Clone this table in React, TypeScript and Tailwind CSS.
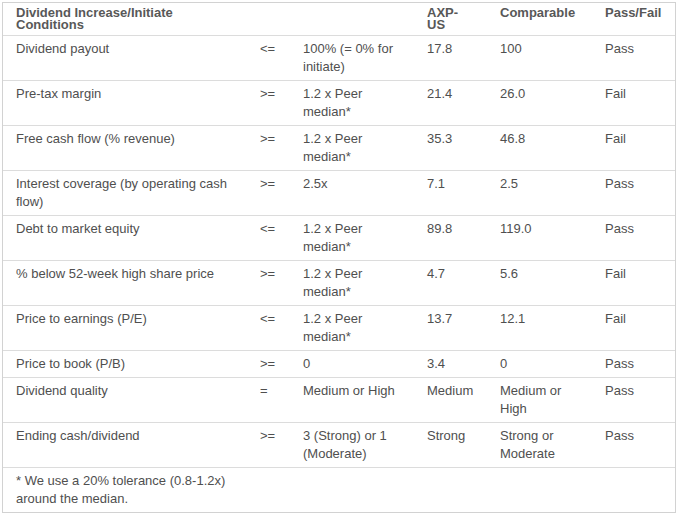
import React from "react";

type Row = { name: string; op: string; cond: string; axp: string; comp: string; pf: string };

const rows: Row[] = [
  { name: "Dividend payout", op: "<=", cond: "100% (= 0% for initiate)", axp: "17.8", comp: "100", pf: "Pass" },
  { name: "Pre-tax margin", op: ">=", cond: "1.2 x Peer median*", axp: "21.4", comp: "26.0", pf: "Fail" },
  { name: "Free cash flow (% revenue)", op: ">=", cond: "1.2 x Peer median*", axp: "35.3", comp: "46.8", pf: "Fail" },
  { name: "Interest coverage (by operating cash flow)", op: ">=", cond: "2.5x", axp: "7.1", comp: "2.5", pf: "Pass" },
  { name: "Debt to market equity", op: "<=", cond: "1.2 x Peer median*", axp: "89.8", comp: "119.0", pf: "Pass" },
  { name: "% below 52-week high share price", op: ">=", cond: "1.2 x Peer median*", axp: "4.7", comp: "5.6", pf: "Fail" },
  { name: "Price to earnings (P/E)", op: "<=", cond: "1.2 x Peer median*", axp: "13.7", comp: "12.1", pf: "Fail" },
  { name: "Price to book (P/B)", op: ">=", cond: "0", axp: "3.4", comp: "0", pf: "Pass" },
  { name: "Dividend quality", op: "=", cond: "Medium or High", axp: "Medium", comp: "Medium or High", pf: "Pass" },
  { name: "Ending cash/dividend", op: ">=", cond: "3 (Strong) or 1 (Moderate)", axp: "Strong", comp: "Strong or Moderate", pf: "Pass" },
];

const grid = "grid grid-cols-[244px_43px_124px_73px_105px_83px]";

export default function App() {
  return (
    <div className="bg-white w-[679px] h-[515px] pt-[2px] pl-[2px]" style={{ fontFamily: '"Liberation Sans", Arial, sans-serif' }}>
      <div className="w-[674px] border border-[#d2d2d2] text-[13px] text-[#4f4f4f]">
        <div className={`${grid} border-b border-[#dcdcdc] font-bold text-[#585858] leading-[12px]`}>
          <div className="pl-[13px] pr-[11px] pt-[4px] pb-[4px]">
            <div>Dividend Increase/Initiate</div>
            <div>Conditions</div>
          </div>
          <div className="pl-[13px] pt-[4px] pb-[4px]"></div>
          <div className="pl-[13px] pt-[4px] pb-[4px]"></div>
          <div className="pl-[13px] pt-[4px] pb-[4px]">
            <div>AXP-</div>
            <div>US</div>
          </div>
          <div className="pl-[13px] pt-[4px] pb-[4px]">Comparable</div>
          <div className="pl-[13px] pt-[4px] pb-[4px]">Pass/Fail</div>
        </div>
        {rows.map((r, i) => (
          <div key={i} className={`${grid} border-b border-[#dcdcdc] leading-[18px]`}>
            <div className="pl-[13px] pr-[11px] py-[4px]">{r.name}</div>
            <div className="pl-[13px] py-[4px]">{r.op}</div>
            <div className="pl-[13px] pr-[15px] py-[4px]">{r.cond}</div>
            <div className="pl-[13px] pr-[8px] py-[4px]">{r.axp}</div>
            <div className="pl-[13px] pr-[12px] py-[4px]">{r.comp}</div>
            <div className="pl-[13px] py-[4px]">{r.pf}</div>
          </div>
        ))}
        <div className={`${grid} leading-[18px]`}>
          <div className="pl-[13px] pr-[11px] py-[4px]">* We use a 20% tolerance (0.8-1.2x) around the median.</div>
        </div>
      </div>
    </div>
  );
}
